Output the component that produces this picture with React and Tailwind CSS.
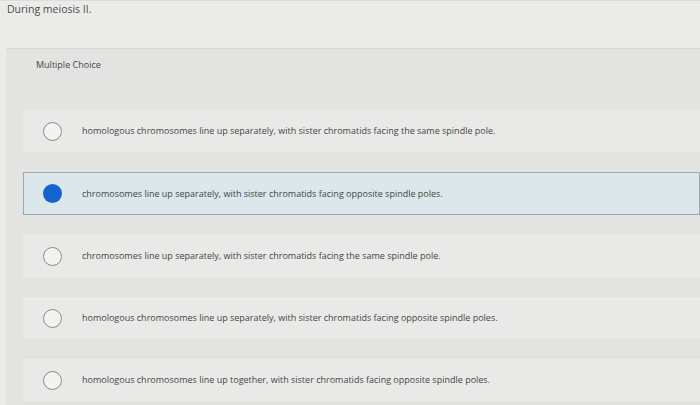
import React from 'react';

const options = [
  'homologous chromosomes line up separately, with sister chromatids facing the same spindle pole.',
  'chromosomes line up separately, with sister chromatids facing opposite spindle poles.',
  'chromosomes line up separately, with sister chromatids facing the same spindle pole.',
  'homologous chromosomes line up separately, with sister chromatids facing opposite spindle poles.',
  'homologous chromosomes line up together, with sister chromatids facing opposite spindle poles.',
];

const selected = 1;

const App = () => {
  return (
    <div
      className="w-[700px] h-[405px] overflow-hidden bg-[#ebebe9] text-[#3f3f3f]"
      style={{ fontFamily: '"Open Sans", Lato, sans-serif' }}
    >
      <div className="h-[48px] border-t border-[#dcdcda] px-[7px] pt-[1px] text-[10.5px] leading-[14px] text-[#4a4a4a]">
        During meiosis II.
      </div>

      <div className="ml-[6px] h-[357px] bg-[#e3e4e2] border-t border-[#d6d7d5]">
        <div className="pl-[30px] pt-[10px] h-[61px] text-[9px] leading-[12px] text-[#444]">
          Multiple Choice
        </div>

        <div className="ml-[17px] flex flex-col gap-[20px]">
          {options.map((text, i) => {
            const isSel = i === selected;
            return (
              <div
                key={i}
                className={
                  isSel
                    ? 'h-[43px] flex items-center pl-[19px] bg-[#dbe7ea] border border-[#9ea7ad]'
                    : 'h-[42px] flex items-center pl-[20px] bg-[#e9eae8]'
                }
              >
                {isSel ? (
                  <span className="w-[19px] h-[19px] rounded-full bg-[#1563cf] shrink-0" />
                ) : (
                  <span className="w-[19px] h-[19px] rounded-full border border-[#8a8a8a] bg-[#f2f2f0] shrink-0" />
                )}
                <span className="ml-[20px] text-[9px] leading-[12px] text-[#454545] whitespace-nowrap">
                  {text}
                </span>
              </div>
            );
          })}
        </div>
      </div>
    </div>
  );
};

export default App;
